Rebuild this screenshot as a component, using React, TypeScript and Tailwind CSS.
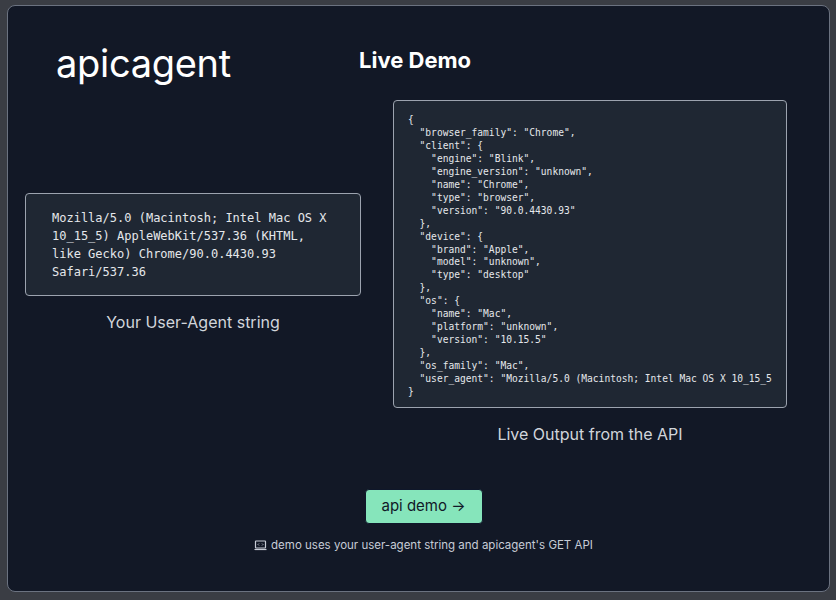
const json = `{
  "browser_family": "Chrome",
  "client": {
    "engine": "Blink",
    "engine_version": "unknown",
    "name": "Chrome",
    "type": "browser",
    "version": "90.0.4430.93"
  },
  "device": {
    "brand": "Apple",
    "model": "unknown",
    "type": "desktop"
  },
  "os": {
    "name": "Mac",
    "platform": "unknown",
    "version": "10.15.5"
  },
  "os_family": "Mac",
  "user_agent": "Mozilla/5.0 (Macintosh; Intel Mac OS X 10_15_5) AppleWebKit/537.36"
}`;

export default function App() {
  return (
    <div className="w-[836px] h-[600px] bg-[#3a3d44] p-[5px_6px_8px_7px] overflow-hidden" style={{ fontFamily: "Inter, 'Noto Sans', sans-serif" }}>
      <div className="h-full rounded-lg border border-[#6b7280] bg-[#121826] flex flex-col">
        <div className="flex gap-[32px] pl-[17px]">
          <div className="w-[336px] flex flex-col">
            <div className="h-[187px] pt-[31px] pl-[31px] text-[38px] leading-[52px] text-white font-normal tracking-[-0.3px]">apicagent</div>
            <div className="border border-[#9ca3af] rounded-sm bg-[#1f2733] h-[103px] px-[26px] flex items-center font-[DejaVu_Sans_Mono] text-[12px] leading-[18px] text-[#e5e7eb]">
              Mozilla/5.0 (Macintosh; Intel Mac OS X 10_15_5) AppleWebKit/537.36 (KHTML, like Gecko) Chrome/90.0.4430.93 Safari/537.36
            </div>
            <div className="text-center mt-[14px] text-[16px] text-[#d1d5db]">Your User-Agent string</div>
          </div>
          <div className="w-[394px] flex flex-col">
            <div className="h-[94px] pt-[38px]"><span className="ml-[-34px] text-[22px] font-bold text-white">Live Demo</span></div>
            <div className="border border-[#9ca3af] rounded-sm bg-[#1f2733] h-[308px] px-[14px] pt-[13px] overflow-hidden">
              <pre className="font-[DejaVu_Sans_Mono] text-[9.6px] leading-[12.95px] text-[#e5e7eb] whitespace-pre overflow-hidden">{json}</pre>
            </div>
            <div className="text-center mt-[14px] text-[16px] text-[#d1d5db]">Live Output from the API</div>
          </div>
        </div>
        <div className="flex flex-col items-center mt-[43px] pl-[10px]">
          <button className="w-[118px] h-[35px] rounded bg-[#86e5bb] text-[#111827] text-[15px] border border-[#0f172a]">api demo →</button>
          <div className="mt-[13px] text-[11.5px] text-[#c7ccd6] flex items-center gap-1">
            <svg width="13" height="11" viewBox="0 0 13 11" fill="none" stroke="#c7ccd6" strokeWidth="1.2"><rect x="1.5" y="1" width="10" height="7" rx="0.5"/><path d="M0.5 9.5h12"/><path d="M5 3.5l-1 1 1 1M8 3.5l1 1-1 1" strokeWidth="0.8"/></svg>
            demo uses your user-agent string and apicagent's GET API
          </div>
        </div>
      </div>
    </div>
  );
}
